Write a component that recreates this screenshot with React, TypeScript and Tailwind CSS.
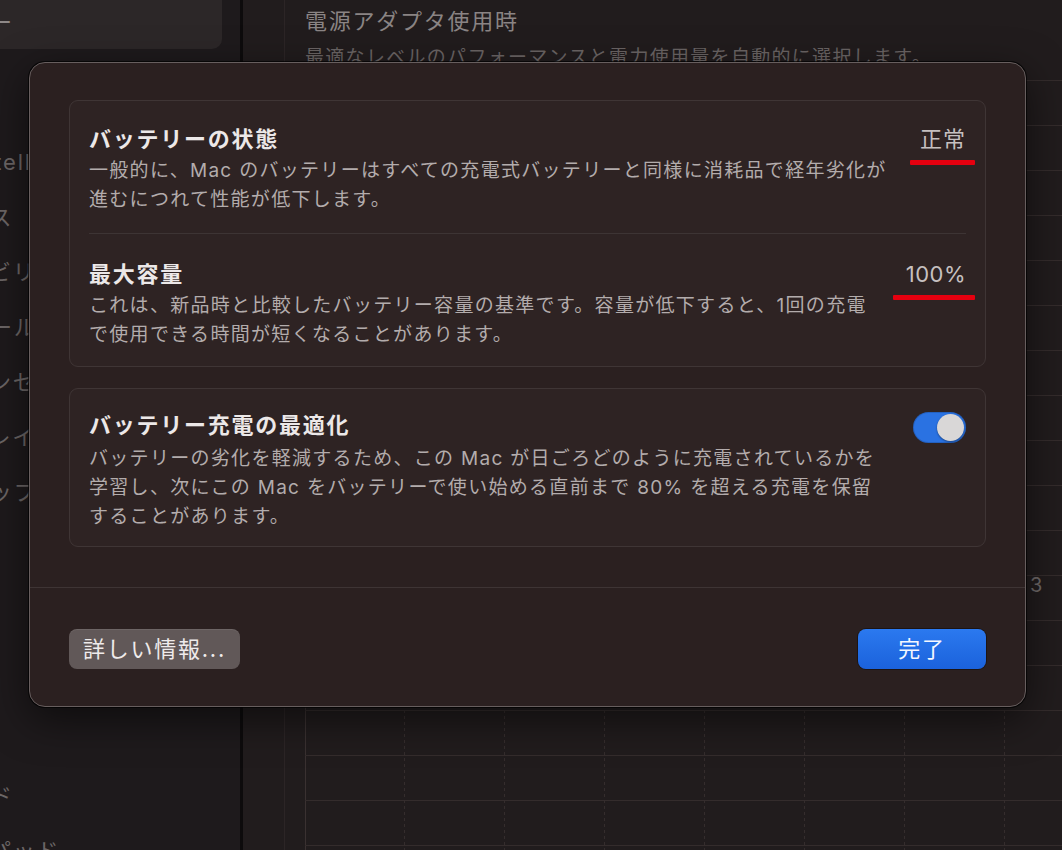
import type { ReactNode } from "react"

const font = "font-['Inter','Noto_Sans_CJK_JP',sans-serif]"

const sideTop = [
    "一般",
    "Apple Intelligence と Siri",
    "プレゼンス",
    "アクセシビリティ",
    "コントロールセンター",
    "スクリーンセーバ",
    "ディスプレイ",
    "デスクトップと Dock",
    "壁紙",
    "通知",
    "サウンド",
    "ユーザ",
]
const sideBottom = ["キーボード", "トラックパッド"]

function Sidebar() {
    return (
        <div className="-ml-[160px] w-[403px] shrink-0 border-r-[3px] border-[#0d0b0c] bg-[#1e1a1c] pr-[18px]">
            <div className="-mt-[4px] flex h-[53px] items-center rounded-b-[10px] bg-[#2c2728] pl-[55px] text-[22px] tracking-[1.75px] text-[#8e8888]">
                バッテリー
            </div>
            <div className="mt-[31px]">
                {sideTop.map((s) => (
                    <div key={s} className="flex h-[55px] items-center whitespace-nowrap pl-[55px] text-[22px] tracking-[1.75px] text-[#6c6666]">
                        {s}
                    </div>
                ))}
            </div>
            <div className="mt-[29px]">
                {sideBottom.map((s) => (
                    <div key={s} className="flex h-[55px] items-center whitespace-nowrap pl-[55px] text-[22px] tracking-[1.75px] text-[#6c6666]">
                        {s}
                    </div>
                ))}
            </div>
        </div>
    )
}

function ChartGrid() {
    const rows = Array.from({ length: 18 }, (_, i) => i * 45)
    const cols = Array.from({ length: 7 }, (_, i) => 99 + i * 100)
    return (
        <svg width="757" height="770" className="block">
            <line x1="0.5" y1="0" x2="0.5" y2="770" stroke="#3a3131" />
            {rows.map((y) => (
                <line key={y} x1="0" x2="757" y1={y + 0.5} y2={y + 0.5} stroke="#342c2c" />
            ))}
            {cols.map((x) => (
                <line key={x} x1={x + 0.5} x2={x + 0.5} y1="0" y2="770" stroke="#352d2d" strokeDasharray="3 3" />
            ))}
        </svg>
    )
}

function Main() {
    return (
        <div className="min-w-0 flex-1 pl-[41px]">
            <div className="h-full border-l border-[#2c2526] pl-[20px]">
                <div className="pt-[6px] text-[22px] leading-[30px] tracking-[1.75px] whitespace-nowrap text-[#8a8484]">
                    電源アダプタ使用時
                </div>
                <div className="mt-[8px] text-[19px] leading-[28px] tracking-[1.3px] whitespace-nowrap text-[#6b6565]">
                    最適なレベルのパフォーマンスと電力使用量を自動的に選択します。
                </div>
                <div className="relative mt-[8px]">
                    <ChartGrid />
                    <span className="absolute left-[725px] top-[490px] text-[20px] text-[#6f6969]">3</span>
                </div>
            </div>
        </div>
    )
}

function Mark({ width }: { width: number }) {
    return (
        <span
            className="absolute right-[-9px] top-[36px] h-[5px] rounded-[1px] bg-[#e5000f]"
            style={{ width }}
        />
    )
}

function Row({
    title,
    lines,
    right,
    gap,
}: {
    title: string
    lines: string[]
    right?: ReactNode
    gap: string
}) {
    return (
        <div className="flex items-start justify-between">
            <div>
                <div className="text-[22px] leading-[30px] font-semibold tracking-[1.75px] whitespace-nowrap text-[#ece8e8]">
                    {title}
                </div>
                <div className={gap}>
                    {lines.map((l) => (
                        <div key={l} className="text-[19px] leading-[29px] tracking-[1.3px] whitespace-nowrap text-[#b3acac]">
                            {l}
                        </div>
                    ))}
                </div>
            </div>
            {right}
        </div>
    )
}

function Toggle() {
    return (
        <div className="mt-[2px] flex h-[31px] w-[53px] shrink-0 items-center justify-end rounded-full bg-[#2a72e2] p-[2px] shadow-[inset_0_0_0_1px_rgba(0,0,0,0.15)]">
            <div className="h-[27px] w-[27px] rounded-full bg-[#d9d7d7] shadow-[0_1px_2px_rgba(0,0,0,0.4)]" />
        </div>
    )
}

function BatterySheet() {
    return (
        <div className="absolute left-[29px] top-[62px] w-[997px] rounded-[16px] border border-[#675e5e] bg-[#2b2020] shadow-[0_0_0_1px_rgba(0,0,0,0.7),0_12px_40px_rgba(0,0,0,0.55)]">
            <div className="px-[39px] pt-[37px] pb-[40px]">
                <div className="rounded-[9px] border border-[#3f3535] bg-[#2e2323] px-[19px]">
                    <div className="pt-[23px] pb-[19px]">
                        <Row
                            title="バッテリーの状態"
                            gap="mt-[2px]"
                            lines={[
                                "一般的に、Mac のバッテリーはすべての充電式バッテリーと同様に消耗品で経年劣化が",
                                "進むにつれて性能が低下します。",
                            ]}
                            right={
                                <div className="relative text-[22px] leading-[30px] tracking-[1px] text-[#c6c0c0]">
                                    正常
                                    <Mark width={65} />
                                </div>
                            }
                        />
                    </div>
                    <div className="h-px bg-[#3d3434]" />
                    <div className="pt-[25px] pb-[17px]">
                        <Row
                            title="最大容量"
                            gap="mt-[2px]"
                            lines={[
                                "これは、新品時と比較したバッテリー容量の基準です。容量が低下すると、1回の充電",
                                "で使用できる時間が短くなることがあります。",
                            ]}
                            right={
                                <div className="relative text-[22px] leading-[30px] tracking-[0.5px] text-[#c6c0c0]">
                                    100%
                                    <Mark width={82} />
                                </div>
                            }
                        />
                    </div>
                </div>

                <div className="mt-[21px] rounded-[9px] border border-[#3f3535] bg-[#2e2323] px-[19px] pt-[21px] pb-[15px]">
                    <Row
                        title="バッテリー充電の最適化"
                        gap="mt-[4px]"
                        lines={[
                            "バッテリーの劣化を軽減するため、この Mac が日ごろどのように充電されているかを",
                            "学習し、次にこの Mac をバッテリーで使い始める直前まで 80% を超える充電を保留",
                            "することがあります。",
                        ]}
                        right={<Toggle />}
                    />
                </div>
            </div>

            <div className="flex items-center justify-between border-t border-[#3e3434] px-[39px] pt-[41px] pb-[37px]">
                <button className="flex h-[40px] w-[171px] items-center justify-center rounded-[8px] bg-[#615858] text-[22px] tracking-[1.75px] text-[#efebeb] shadow-[inset_0_1px_0_rgba(255,255,255,0.08)]">
                    詳しい情報...
                </button>
                <button className="flex h-[40px] w-[128px] items-center justify-center rounded-[8px] bg-gradient-to-b from-[#2b79ef] to-[#1b62dc] text-[22px] tracking-[1.75px] text-[#f4f7ff] shadow-[0_0_0_1px_rgba(0,0,0,0.35)]">
                    完了
                </button>
            </div>
        </div>
    )
}

export default function App() {
    return (
        <div className={`relative h-[850px] w-[1062px] overflow-hidden bg-[#211c1d] ${font}`}>
            <div className="flex h-full">
                <Sidebar />
                <Main />
            </div>
            <BatterySheet />
        </div>
    )
}
